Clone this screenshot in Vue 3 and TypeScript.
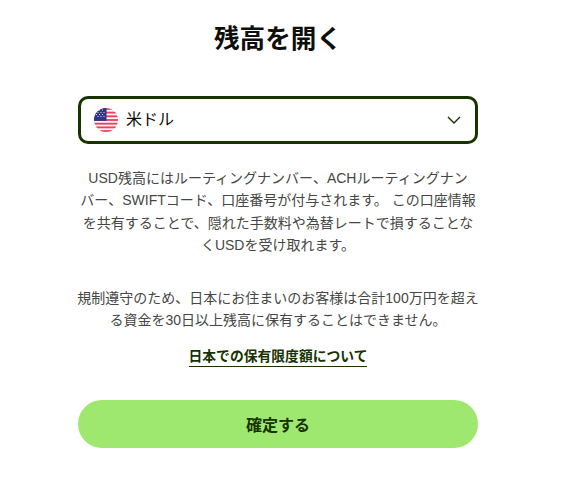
<script setup lang="ts">
const stars: [number, number][] = [
  [2.5, 3.5], [5.5, 2], [8.5, 2], [4, 4.5], [7, 4.5], [10, 4.5], [2.5, 6.5], [5.5, 6.5], [8.5, 6.5], [4, 8.5], [7, 8.5], [10, 8.5],
]
const stripes = [0, 1, 2, 3, 4, 5, 6].map((i) => i * 3.69)
</script>

<template>
  <main class="page" lang="ja">
    <h1 class="title">残高を開く</h1>
    <button class="select" type="button">
      <svg class="flag" viewBox="0 0 24 24" width="24" height="24" aria-hidden="true">
        <defs>
          <clipPath id="flag-clip"><circle cx="12" cy="12" r="12" /></clipPath>
        </defs>
        <g clip-path="url(#flag-clip)">
          <rect width="24" height="24" fill="#f7f4f6" />
          <rect v-for="y in stripes" :key="y" x="0" :y="y" width="24" height="1.85" fill="#ee3f5d" />
          <rect width="12.5" height="12.9" fill="#2f3585" />
          <circle v-for="(s, i) in stars" :key="i" :cx="s[0]" :cy="s[1]" r="0.6" fill="#f7f4f6" />
        </g>
      </svg>
      <span class="label">米ドル</span>
      <svg class="chevron" viewBox="0 0 14 8" width="14" height="8" aria-hidden="true">
        <path d="M1 1l6 6 6-6" fill="none" stroke="#163300" stroke-width="1.4" />
      </svg>
    </button>
    <p class="para first">USD残高にはルーティングナンバー、ACHルーティングナンバー、SWIFTコード、口座番号が付与されます。 この口座情報を共有することで、隠れた手数料や為替レートで損することなくUSDを受け取れます。</p>
    <p class="para second">規制遵守のため、日本にお住まいのお客様は合計100万円を超える資金を30日以上残高に保有することはできません。</p>
    <a class="link" href="#">日本での保有限度額について</a>
    <button class="confirm" type="button">確定する</button>
  </main>
</template>

<style>
html, body { margin: 0; background: #fff; }
</style>

<style scoped>
.page {
  box-sizing: border-box;
  width: 400px;
  margin-left: 78px;
  padding-top: 20px;
  display: flex;
  flex-direction: column;
  align-items: stretch;
  font-family: "Liberation Sans", "Noto Sans CJK JP", sans-serif;
  color: #454745;
}
.title {
  margin: 0 0 0;
  height: 36px;
  line-height: 38px;
  font-size: 25.6px;
  font-weight: 700;
  text-align: center;
  color: #0e0f0c;
}
.select {
  box-sizing: border-box;
  margin-top: 40px;
  height: 48px;
  padding: 0 16px;
  display: flex;
  align-items: center;
  background: #fff;
  border: 3px solid #163300;
  border-radius: 10px;
  font: inherit;
}
.flag { flex: none; margin-left: -3px; }
.label {
  margin-left: 8px;
  flex: 1;
  text-align: left;
  font-size: 16px;
  line-height: 20px;
  margin-top: -1px;
  color: #0e0f0c;
}
.chevron { flex: none; margin-right: -2px; }
.para {
  margin: 0 -1px;
  font-size: 14px;
  line-height: 22.4px;
  text-align: center;
  line-break: strict;
}
.first { margin-top: 23px; }
.second { margin-top: 30px; }
.link {
  margin-top: 16px;
  align-self: center;
  font-size: 13.8px;
  line-height: 19px;
  font-weight: 700;
  color: #163300;
  text-decoration: none;
  border-bottom: 1px solid #163300;
}
.confirm {
  margin-top: 33px;
  height: 48px;
  border: 0;
  border-radius: 24px;
  background: #9fe870;
  color: #163300;
  font: inherit;
  font-size: 16px;
  font-weight: 700;
}
</style>
